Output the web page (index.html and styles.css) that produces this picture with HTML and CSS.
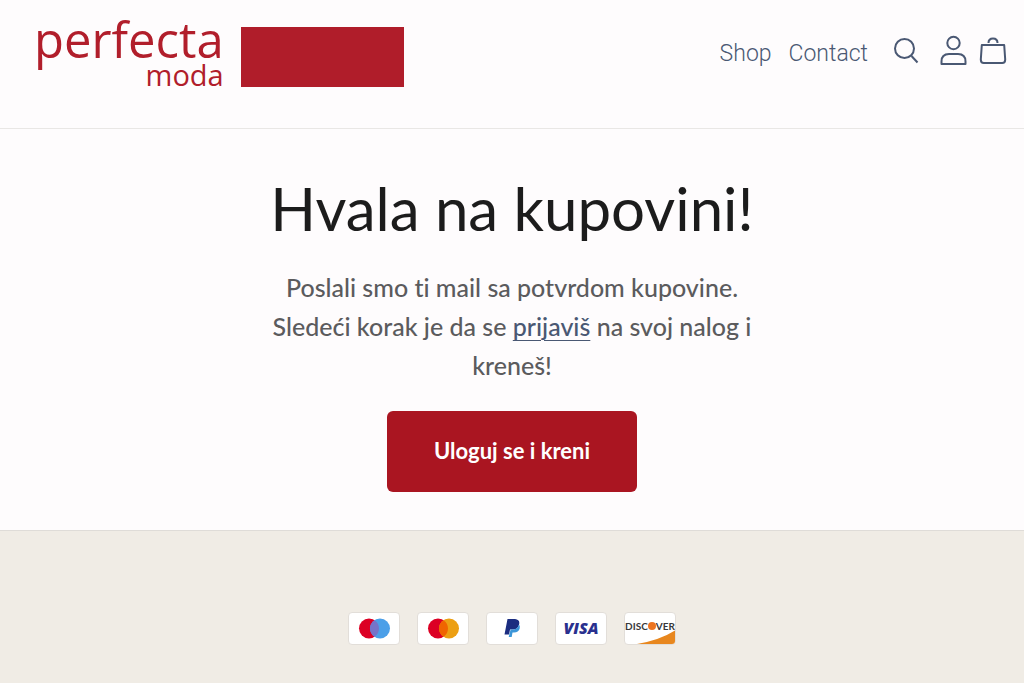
FILE: index.html
```html
<!DOCTYPE html>
<html lang="sr-Latn">
<head>
  <meta charset="UTF-8">
  <meta name="viewport" content="width=device-width, initial-scale=1">
  <title>Perfecta moda - Hvala na kupovini!</title>
  <link rel="stylesheet" href="styles.css">
</head>
<body>

<header class="header">
  <a class="logo" href="#">
    <span class="logo-text">
      <span class="logo-name">perfecta</span>
      <span class="logo-sub">moda</span>
    </span>
    <span class="logo-block"></span>
  </a>

  <nav class="nav">
    <a class="nav-link" href="#">Shop</a>
    <a class="nav-link" href="#">Contact</a>
    <div class="nav-icons">
      <button class="icon-button search" type="button" aria-label="Search">
        <svg width="28" height="32" viewBox="0 0 28 32">
          <circle cx="12.500" cy="13.500" r="9.500"/>
          <path d="M19.500 21L25.500 27.500"/>
        </svg>
      </button>
      <a class="icon-button" href="#" aria-label="Account">
        <svg width="28" height="32" viewBox="0 0 28 32">
          <circle cx="14.500" cy="8" r="6.200"/>
          <path d="M2.500 29v-2.500q0-7.500 7.500-7.500h9q7.500 0 7.500 7.500v2.500z"/>
        </svg>
      </a>
      <a class="icon-button" href="#" aria-label="Cart">
        <svg width="28" height="32" viewBox="0 0 28 32">
          <path d="M2.800 10h22.400l1 14.500q0 3.500-3 3.500H4.800q-3 0-3-3.500zM9.500 8q0-4.500 4.500-4.500t4.500 4.500"/>
        </svg>
      </a>
    </div>
  </nav>
</header>

<main class="main">
  <h1>Hvala na kupovini!</h1>
  <p>Poslali smo ti mail sa potvrdom kupovine. Sledeći korak je da se <a href="#">prijaviš</a> na svoj nalog i kreneš!</p>
  <button class="login-button" type="button">Uloguj se i kreni</button>
</main>

<footer class="footer">
  <ul class="payments">
    <li class="card">
      <svg width="50" height="31" viewBox="0 0 50 31" role="img" aria-label="Maestro">
        <circle cx="20" cy="15.500" r="10" fill="#dc0024"/>
        <circle cx="31" cy="15.500" r="10" fill="#4b9fe8"/>
        <path d="M25.500 7.150a10 10 0 0 1 0 16.700a10 10 0 0 1 0-16.700z" fill="#7673c9"/>
      </svg>
    </li>
    <li class="card">
      <svg width="50" height="31" viewBox="0 0 50 31" role="img" aria-label="Mastercard">
        <circle cx="20" cy="15.500" r="10" fill="#dc0024"/>
        <circle cx="31" cy="15.500" r="10" fill="#ec9f13"/>
        <path d="M25.500 7.150a10 10 0 0 1 0 16.700a10 10 0 0 1 0-16.700z" fill="#f06400"/>
      </svg>
    </li>
    <li class="card">
      <svg width="50" height="31" viewBox="0 0 50 31" role="img" aria-label="PayPal">
        <path d="M20.500 6h7.500q5 .5 4.200 5q-1 5.500-6.700 5.500h-2.500l-.9 5h-4.600z" fill="#1b2d80"/>
        <path d="M23.600 16.500h2q5 0 6.400-5q1.300 1.500.7 4q-1.200 4-5.700 4h-1.500l-.8 4.500h-3z" fill="#3b96d8"/>
      </svg>
    </li>
    <li class="card visa">VISA</li>
    <li class="card discover">
      <svg width="50" height="31" viewBox="0 0 50 31" aria-hidden="true">
        <path d="M12 31Q35 27 50 17.500V31z" fill="#e8871e"/>
      </svg>
      <span class="discover-name">DISC<i class="discover-dot"></i>VER</span>
    </li>
  </ul>
</footer>

</body>
</html>
```
FILE: styles.css
```css
* {
  box-sizing: border-box;
}

body {
  margin: 0;
  min-height: 100vh;
  display: flex;
  flex-direction: column;
  background: #fefcfd;
  font-family: Lato, sans-serif;
  font-variant-ligatures: none;
  color: #5b5b5d;
}

a {
  color: #4a5873;
}

.header {
  display: flex;
  justify-content: space-between;
  align-items: flex-start;
  padding: 16px 17px 40px 34px;
  border-bottom: 1px solid #e9e7e5;
}

.logo {
  display: flex;
  gap: 17px;
  color: #b11e2b;
  font-family: "Open Sans", sans-serif;
  text-decoration: none;
}

.logo-text {
  display: flex;
  flex-direction: column;
  align-items: flex-end;
}

.logo-name {
  font-size: 49px;
  line-height: 46px;
}

.logo-sub {
  font-size: 29px;
  line-height: 26px;
}

.logo-block {
  width: 163px;
  height: 60px;
  margin-top: 11px;
  background: #b01d2a;
}

.nav {
  display: flex;
  align-items: center;
  gap: 17px;
  padding-top: 18px;
}

.nav-link {
  padding-top: 6px;
  font-family: Roboto, sans-serif;
  font-size: 23px;
  font-weight: 300;
  line-height: 28px;
  text-decoration: none;
}

.nav-icons {
  display: flex;
  gap: 12px;
  margin-left: 7px;
}

.icon-button {
  display: block;
  padding: 0;
  border: none;
  background: none;
  cursor: pointer;
}

.search {
  margin-right: 7px;
}

.icon-button svg {
  display: block;
  fill: none;
  stroke: #4a5873;
  stroke-width: 2;
  stroke-linejoin: round;
}

.main {
  padding: 41px 20px 38px;
  text-align: center;
}

h1 {
  margin: 0 0 22px;
  color: #1c1c1c;
  font-size: 60px;
  font-weight: 400;
  line-height: 76px;
}

.main p {
  max-width: 512px;
  margin: 0 auto 26px;
  font-size: 25px;
  font-weight: 500;
  line-height: 39px;
}

.main p a {
  text-decoration-thickness: 1px;
  text-underline-offset: 4px;
}

.login-button {
  display: block;
  width: 250px;
  height: 81px;
  margin: 0 auto;
  padding: 0 0 2px;
  border: none;
  border-radius: 6px;
  background: #aa1521;
  color: #fff;
  font-family: Lato, sans-serif;
  font-size: 22px;
  font-weight: 700;
  cursor: pointer;
}

.footer {
  flex: 1;
  padding: 81px 20px 36px;
  border-top: 1px solid #dfdcd8;
  background: #f0ece5;
}

.payments {
  display: flex;
  justify-content: center;
  gap: 17px;
  margin: 0;
  padding: 0;
  list-style: none;
}

.card {
  position: relative;
  width: 52px;
  height: 33px;
  overflow: hidden;
  border: 1px solid #e2ded9;
  border-radius: 4px;
  background: #fff;
}

.card svg {
  display: block;
}

.visa {
  color: #29308e;
  font-family: "Open Sans", sans-serif;
  font-size: 16px;
  font-style: italic;
  font-weight: 800;
  line-height: 31px;
  text-align: center;
}

.discover-name {
  position: absolute;
  top: 6px;
  left: 0;
  right: 0;
  display: flex;
  justify-content: center;
  align-items: center;
  color: #38383a;
  font-size: 10px;
  font-weight: 700;
  line-height: 14px;
}

.discover-dot {
  flex: none;
  width: 8px;
  height: 8px;
  border-radius: 50%;
  background: #ec7420;
}
```
